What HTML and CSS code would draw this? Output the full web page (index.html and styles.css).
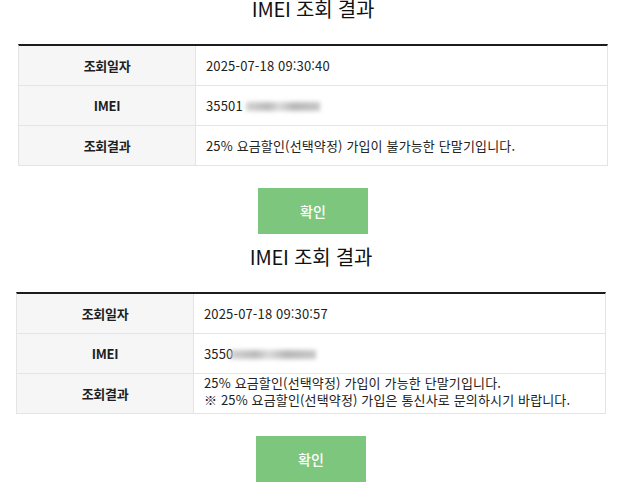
FILE: index.html
```html
<!DOCTYPE html>
<html lang="ko">
<head>
<meta charset="utf-8">
<title>IMEI 조회 결과</title>
<link rel="stylesheet" href="styles.css">
</head>
<body>
<section class="result result-first">
  <h2 class="result-title">IMEI 조회 결과</h2>
  <div class="result-table">
    <div class="row">
      <div class="label">조회일자</div>
      <div class="value">2025-07-18 09:30:40</div>
    </div>
    <div class="row">
      <div class="label">IMEI</div>
      <div class="value">35501<span class="masked masked-1"></span></div>
    </div>
    <div class="row">
      <div class="label">조회결과</div>
      <div class="value">25% 요금할인(선택약정) 가입이 불가능한 단말기입니다.</div>
    </div>
  </div>
  <div class="actions"><button class="confirm" type="button">확인</button></div>
</section>
<section class="result result-second">
  <h2 class="result-title">IMEI 조회 결과</h2>
  <div class="result-table">
    <div class="row">
      <div class="label">조회일자</div>
      <div class="value">2025-07-18 09:30:57</div>
    </div>
    <div class="row">
      <div class="label">IMEI</div>
      <div class="value">3550<span class="masked masked-2"></span></div>
    </div>
    <div class="row">
      <div class="label">조회결과</div>
      <div class="value value-multi">
        <span class="line">25% 요금할인(선택약정) 가입이 가능한 단말기입니다.</span>
        <span class="line">※ 25% 요금할인(선택약정) 가입은 통신사로 문의하시기 바랍니다.</span>
      </div>
    </div>
  </div>
  <div class="actions"><button class="confirm" type="button">확인</button></div>
</section>
</body>
</html>
```

FILE: styles.css
```css
* {
  box-sizing: border-box;
}

html, body {
  margin: 0;
  padding: 0;
  background: #ffffff;
}

body {
  font-family: "Noto Sans CJK KR", "Noto Sans", sans-serif;
  color: #222222;
  font-size: 13px;
  overflow: hidden;
}

.result-first {
  margin: 0 9px 0 18px;
}

.result-second {
  margin: 14px 11px 0 16px;
}

.result-title {
  margin: 0;
  font-size: 20px;
  line-height: 18px;
  font-weight: 400;
  text-align: center;
  letter-spacing: -0.2px;
  color: #111111;
}

.result-table {
  margin-top: 26px;
  border-top: 2px solid #1c1c1c;
  border-left: 1px solid #e4e4e4;
  border-right: 1px solid #e4e4e4;
}

.row {
  display: grid;
  grid-template-columns: 177px 1fr;
  height: 40px;
  border-bottom: 1px solid #e4e4e4;
}

.label {
  background: #f6f6f6;
  border-right: 1px solid #e4e4e4;
  display: flex;
  align-items: center;
  justify-content: center;
  font-weight: 700;
  letter-spacing: -0.3px;
  color: #1e1e1e;
}

.value {
  display: flex;
  align-items: center;
  padding: 0 10px;
  letter-spacing: 0.15px;
  color: #222222;
  white-space: nowrap;
}

.value-multi {
  flex-direction: column;
  align-items: flex-start;
  justify-content: flex-start;
}

.line {
  display: block;
  height: 17px;
  line-height: 17px;
}

.masked {
  display: inline-block;
  height: 9px;
  background: linear-gradient(90deg, #c8c8c8 0%, #a9a9a9 30%, #d2d2d2 45%, #a6a6a6 65%, #b9b9b9 100%);
  filter: blur(2px);
  opacity: 0.8;
  margin-top: 2px;
}

.masked-1 {
  width: 74px;
  margin-left: 3px;
}

.masked-2 {
  width: 86px;
  margin-left: -3px;
}

.actions {
  display: flex;
  justify-content: center;
  margin-top: 22px;
}

.confirm {
  width: 110px;
  height: 46px;
  border: 0;
  margin: 0;
  padding: 0;
  background: #7dc67e;
  color: #ffffff;
  font-family: "Noto Sans CJK KR", "Noto Sans", sans-serif;
  font-size: 14px;
  font-weight: 500;
}
```
